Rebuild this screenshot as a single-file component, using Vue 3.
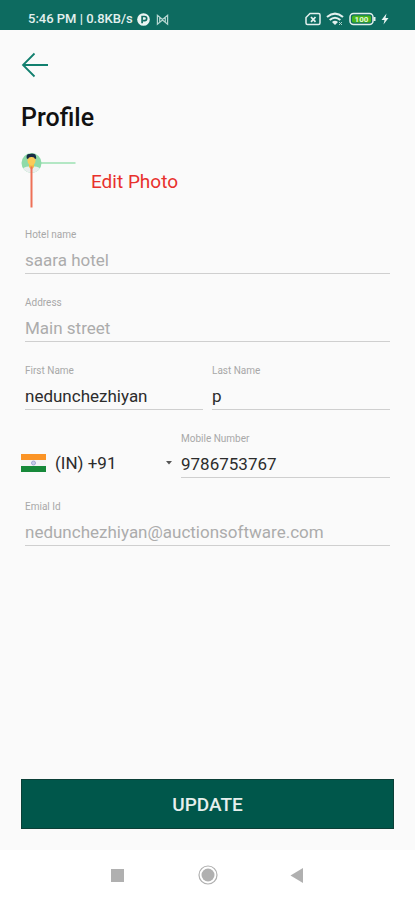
<script setup>
import { reactive, ref } from 'vue'

const form = reactive({
  hotel: 'saara hotel',
  address: 'Main street',
  first: 'nedunchezhiyan',
  last: 'p',
  country: 'IN',
  mobile: '9786753767',
  email: 'nedunchezhiyan@auctionsoftware.com',
})

const countries = ref([{ code: 'IN', label: '(IN) +91' }])
</script>

<template>
  <div class="screen">
    <header class="status">
      <div class="status-group">
        <span>5:46 PM | 0.8KB/s</span>
        <svg class="app-icon" viewBox="0 0 14 14" aria-hidden="true">
          <circle cx="7" cy="7" r="6.800" fill="#eaf4f2" />
          <path d="M5.500 11V3.800H8.200A2.200 2.200 0 0 1 8.200 8.200H6.500" fill="none" stroke="#0d6b60" stroke-width="1.800" />
        </svg>
        <svg class="app-icon mail-icon" viewBox="0 0 14 14" aria-hidden="true">
          <path d="M1.500 12V2.500L7 7L12.500 2.500V12L7 7.500ZM4 5V9.500M10 5V9.500" fill="none" stroke="#b5d6d1" stroke-width="1.300" />
        </svg>
      </div>
      <div class="status-group right">
        <svg width="16" height="14" viewBox="0 0 16 14" aria-hidden="true">
          <path d="M5 1.500H13.500Q15 1.500 15 3V11Q15 12.500 13.500 12.500H2.500Q1 12.500 1 11V5.500Z" fill="none" stroke="#e3f0ee" stroke-width="1.500" />
          <path d="M6 5L10.500 9.800M10.500 5L6 9.800" stroke="#e3f0ee" stroke-width="1.800" />
        </svg>
        <svg width="18" height="14" viewBox="0 0 18 14" aria-hidden="true">
          <path d="M1 5Q9 -1.800 17 5M3.700 8Q9 3.500 14.300 8" fill="none" stroke="#e3f0ee" stroke-width="2.100" />
          <path d="M6 10Q9 7.500 12 10L9 13Z" fill="#e3f0ee" />
          <path d="M13 10L16 13M16 10L13 13" stroke="#a8cfc9" stroke-width="1" />
        </svg>
        <svg width="27" height="14" viewBox="0 0 27 14" aria-hidden="true">
          <rect x="1" y="1.500" width="23" height="11" rx="3.500" fill="#0d6b60" stroke="#e3f0ee" stroke-width="1.500" />
          <rect x="3" y="3.500" width="19" height="7" rx="1.500" fill="#45b51c" />
          <path d="M25.500 5V9" stroke="#e3f0ee" stroke-width="2" />
          <text x="12.500" y="10" text-anchor="middle" class="battery-text">100</text>
        </svg>
        <svg width="8" height="14" viewBox="0 0 8 14" aria-hidden="true">
          <path d="M5.500 1.500L0.500 8H3.500L2.500 12.500L7.500 6H4.500Z" fill="#e9f4f2" />
        </svg>
      </div>
    </header>

    <main class="content">
      <button class="back" type="button" aria-label="Back">
        <svg width="28" height="26" viewBox="0 0 28 26" aria-hidden="true">
          <path d="M27 13H2M13.500 1.500L2 13L13.500 24.500" fill="none" stroke="#12806f" stroke-width="1.800" />
        </svg>
      </button>

      <h1>Profile</h1>

      <div class="photo">
        <svg width="56" height="56" viewBox="0 0 56 56" aria-hidden="true">
          <defs>
            <clipPath id="avatar-clip"><circle cx="10.500" cy="11" r="10" /></clipPath>
          </defs>
          <path d="M20 11H54.500" stroke="#9be0b2" stroke-width="1.700" />
          <g clip-path="url(#avatar-clip)">
            <rect width="21" height="22" fill="#8edba9" />
            <path d="M0 22V18Q3 14.500 7.500 14.500H13.500Q18 14.500 21 18V22Z" fill="#e9eeee" />
            <path d="M8 11H13V15L10.500 18L8 15Z" fill="#f5bd45" />
            <ellipse cx="10.500" cy="8.500" rx="4" ry="5" fill="#fbcb58" />
            <path d="M5.800 6.500Q4.800 1.500 8.500 2Q15.500 0 15.200 6.500L14 7Q13.500 4.800 10.500 5Q7.500 4.800 7 7Z" fill="#182c45" />
          </g>
          <path d="M10.500 14.500V55.500" stroke="#ee7057" stroke-width="2" />
        </svg>
        <button class="edit" type="button">Edit Photo</button>
      </div>

      <form id="profile-form" class="form" @submit.prevent>
        <div class="field">
          <label for="hotel">Hotel name</label>
          <input id="hotel" v-model="form.hotel" class="muted" type="text" readonly />
        </div>
        <div class="field">
          <label for="address">Address</label>
          <input id="address" v-model="form.address" class="muted" type="text" readonly />
        </div>
        <div class="names">
          <div class="field">
            <label for="first">First Name</label>
            <input id="first" v-model="form.first" type="text" />
          </div>
          <div class="field">
            <label for="last">Last Name</label>
            <input id="last" v-model="form.last" type="text" />
          </div>
        </div>
        <div class="phone">
          <div class="country">
            <svg width="25" height="18" viewBox="0 0 25 18" aria-hidden="true">
              <rect width="25" height="18" fill="#f4f4f6" />
              <rect width="25" height="6" fill="#fb9426" />
              <rect y="12" width="25" height="6" fill="#17893a" />
              <circle cx="12.500" cy="9" r="2" fill="#c9cde8" stroke="#a3a9d6" stroke-width="1" />
            </svg>
            <select v-model="form.country" aria-label="Country code">
              <option v-for="c in countries" :key="c.code" :value="c.code">{{ c.label }}</option>
            </select>
            <svg width="8" height="4" viewBox="0 0 8 4" aria-hidden="true">
              <path d="M1 0H7L4 3.500Z" fill="#555" />
            </svg>
          </div>
          <div class="field">
            <label for="mobile">Mobile Number</label>
            <input id="mobile" v-model="form.mobile" type="tel" />
          </div>
        </div>
        <div class="field">
          <label for="email">Emial Id</label>
          <input id="email" v-model="form.email" class="muted" type="email" readonly />
        </div>
      </form>

      <button class="update" type="submit" form="profile-form">UPDATE</button>
    </main>

    <nav class="navbar" aria-label="System navigation">
      <button type="button" aria-label="Recent apps">
        <svg width="20" height="20" viewBox="0 0 20 20" aria-hidden="true"><rect x="3" y="4" width="13" height="13" fill="#b0b0b0" /></svg>
      </button>
      <button type="button" aria-label="Home">
        <svg width="20" height="20" viewBox="0 0 20 20" aria-hidden="true">
          <circle cx="10" cy="10" r="9" fill="#fff" stroke="#b0b0b0" stroke-width="1.200" />
          <circle cx="10" cy="10" r="6.500" fill="#b0b0b0" />
        </svg>
      </button>
      <button type="button" aria-label="Back">
        <svg width="20" height="20" viewBox="0 0 20 20" aria-hidden="true"><path d="M15 3V18L2.500 10.500Z" fill="#b0b0b0" /></svg>
      </button>
    </nav>
  </div>
</template>

<style>
body {
  margin: 0;
}
</style>

<style scoped>
.screen {
  display: flex;
  flex-direction: column;
  min-height: 100vh;
  background: #fafafa;
  color: #2c2c2c;
  font-family: Roboto, "Liberation Sans", sans-serif;
}

.screen *,
.screen {
  box-sizing: border-box;
}

svg {
  display: block;
  flex: none;
}

button,
input,
select {
  margin: 0;
  padding: 0;
  border: 0;
  border-radius: 0;
  background: none;
  color: inherit;
  font-family: inherit;
  outline: none;
}

button {
  cursor: pointer;
}

.status {
  display: flex;
  justify-content: space-between;
  height: 30px;
  padding: 8px 26px 0 28px;
  background: #0d6b60;
  color: #e3f0ee;
  font-size: 13px;
  font-weight: 500;
  line-height: 22px;
}

.status-group {
  display: flex;
  align-items: center;
  gap: 4px;
}

.status-group.right {
  gap: 5px;
}

.app-icon {
  width: 13px;
  height: 13px;
}

.mail-icon {
  margin-left: 2px;
}

.battery-text {
  fill: #e4f7dc;
  font-size: 8px;
  font-weight: 700;
}

.content {
  display: flex;
  flex: 1;
  flex-direction: column;
  padding: 22px 21px 21px;
}

.back {
  align-self: flex-start;
  height: 26px;
}

h1 {
  margin: 24px 0 0;
  color: #111;
  font-size: 25px;
  font-weight: 500;
  line-height: 32px;
}

.photo {
  display: flex;
  align-items: center;
  gap: 14px;
  margin-top: 18px;
}

.edit {
  padding-top: 4px;
  color: #e8302c;
  font-size: 19px;
  line-height: 24px;
}

.form {
  display: flex;
  flex-direction: column;
  gap: 21px;
  margin: 19px 0 24px;
  padding: 0 4px;
}

.field {
  display: flex;
  flex: 1;
  flex-direction: column;
  gap: 6px;
  min-width: 0;
}

.field label {
  color: #a8a8a8;
  font-size: 10px;
  line-height: 16px;
}

.field input {
  width: 100%;
  height: 25px;
  padding-bottom: 2px;
  border-bottom: 1px solid #cfcfcf;
  font-size: 17px;
}

.field .muted {
  color: #acacac;
}

.names {
  display: flex;
  gap: 9px;
}

.phone {
  display: flex;
  align-items: flex-end;
  gap: 8px;
  margin-left: -4px;
}

.country {
  display: flex;
  flex: none;
  align-items: center;
  width: 152px;
  height: 24px;
  margin-bottom: 3px;
}

.country select {
  flex: 1;
  min-width: 0;
  padding-left: 9px;
  appearance: none;
  font-size: 17px;
}

.update {
  height: 50px;
  margin-top: auto;
  border: 1px solid #0b3f37;
  background: #00574b;
  color: #e6efed;
  font-size: 19px;
  font-weight: 500;
}

.navbar {
  display: flex;
  align-items: center;
  justify-content: center;
  gap: 70px;
  height: 50px;
  background: #fff;
}
</style>
